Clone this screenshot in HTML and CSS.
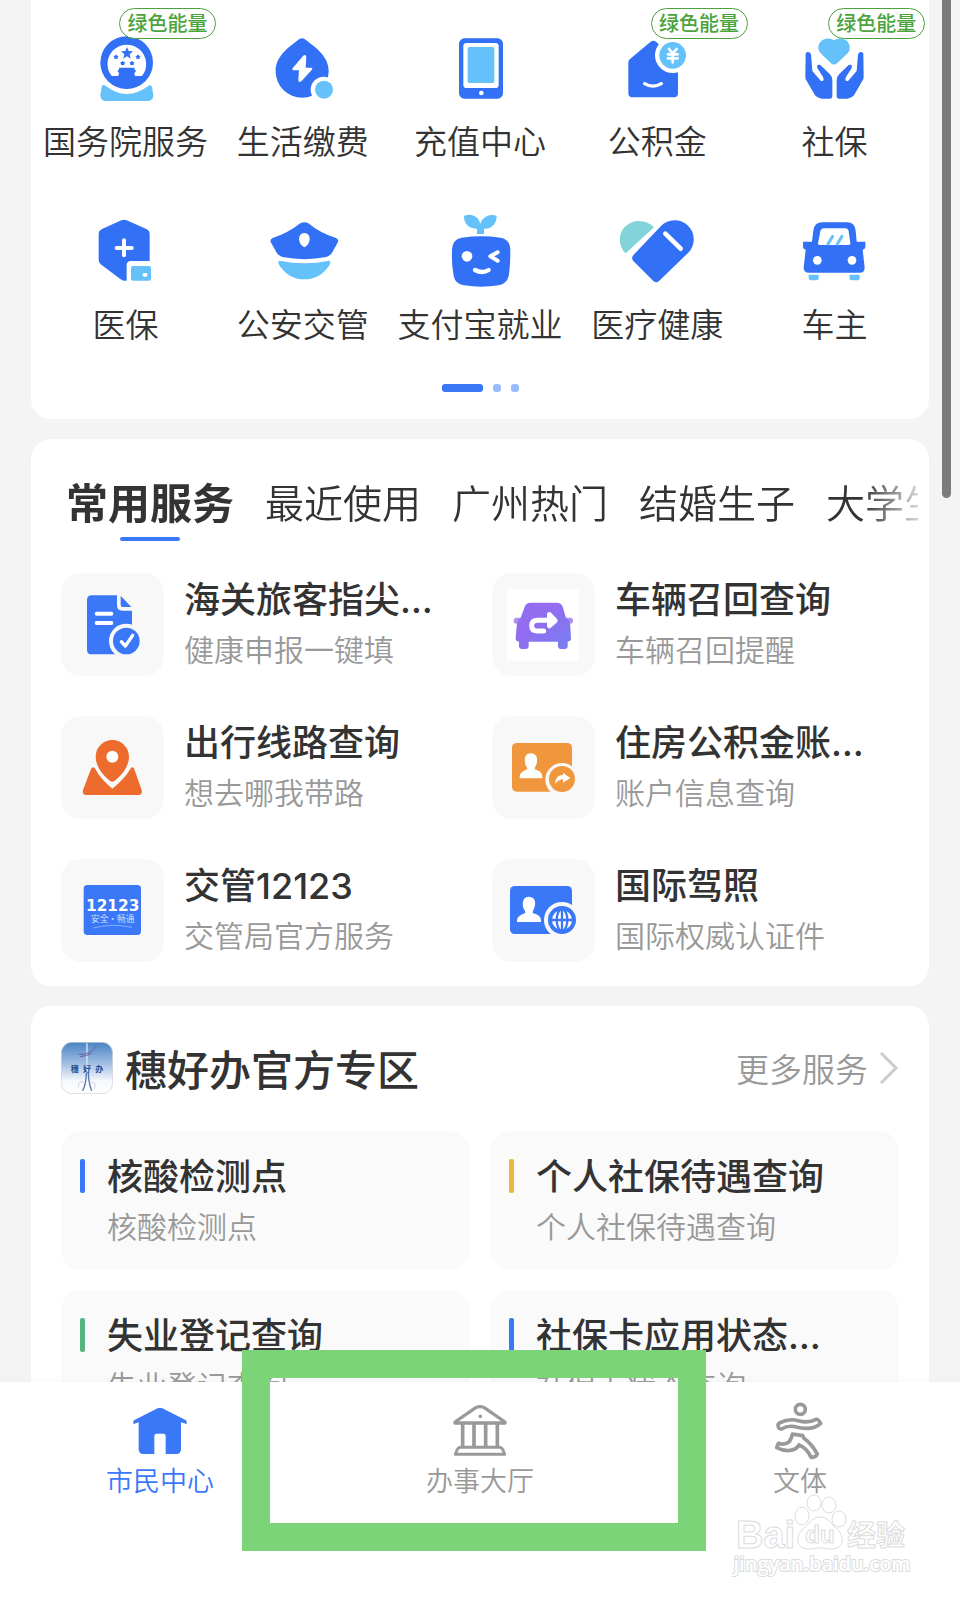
FILE: index.html
```html
<!DOCTYPE html>
<html lang="zh-CN">
<head>
<meta charset="utf-8">
<meta name="viewport" content="width=device-width, initial-scale=1">
<title>市民中心</title>
<link rel="stylesheet" href="styles.css">
</head>
<body>
<main class="content">
  <section class="card card-top">
    <div class="apps">
      <a class="app" href="#">
        <svg class="app-icon" viewBox="257 84 240 240" aria-hidden="true">
          <circle class="blue" cx="379" cy="188" r="79"/>
          <path class="white" d="M334 228A58 58 0 1 1 425 228H404L402 219L408 212L403 209V203H356V209L351 212L356 219L354 228Z"/>
          <path class="blue" d="M380 141L385 153L398 154L388 163L391 176L380 169L369 176L372 163L362 154L375 153Z"/>
          <path class="blue" d="M347 163l3 4 5 1-3 4 0 5-5-1-5 1 0-5-3-4 5-1zM413 163l3 4 5 1-3 4 0 5-5-1-5 1 0-5-3-4 5-1zM367 182l3 4 5 1-3 4 0 5-5-1-5 1 0-5-3-4 5-1zM395 182l3 4 5 1-3 4 0 5-5-1-5 1 0-5-3-4 5-1z"/>
          <path class="sky" d="M313 256Q379 308 447 256Q453 254 455 261L459 285Q459 303 440 303H319Q300 303 300 285L304 261Q306 253 313 256Z"/>
        </svg>
        <span class="app-name">国务院服务</span>
        <span class="badge">绿色能量</span>
      </a>
      <a class="app" href="#">
        <svg class="app-icon" viewBox="788 84 240 240" aria-hidden="true">
          <path class="blue" d="M896 118Q905 111 914 118C950 146 985 170 985 214A79.500 79.500 0 0 1 826 214C826 170 860 146 896 118Z"/>
          <path class="white" d="M908 168Q916 161 918 171L916 203H932Q939 204 934 210L903 244Q894 249 894 239L896 211H880Q873 209 878 203Z"/>
          <circle class="white" cx="970" cy="269" r="39"/>
          <circle class="sky" cx="971" cy="269" r="27"/>
        </svg>
        <span class="app-name">生活缴费</span>
      </a>
      <a class="app" href="#">
        <svg class="app-icon" viewBox="1320 84 240 240" aria-hidden="true">
          <rect class="blue" x="1377" y="115" width="132" height="181" rx="16"/>
          <rect class="white" x="1390" y="129" width="106" height="135" rx="10"/>
          <rect class="sky" x="1403" y="141" width="80" height="108" rx="6"/>
          <circle class="white" cx="1444" cy="279" r="7"/>
        </svg>
        <span class="app-name">充值中心</span>
      </a>
      <a class="app" href="#">
        <svg class="app-icon" viewBox="411 84 240 240" aria-hidden="true">
          <path class="blue" d="M450 177L511 126Q520 118 529 126L594 186V280Q594 292 582 292H457Q445 292 445 280V187Q445 181 450 177Z"/>
          <circle class="white" cx="578" cy="166" r="53"/>
          <circle class="sky" cx="578" cy="166" r="40"/>
          <path class="line-white" stroke-width="8" d="M567 147L578 160L590 147M564 163H593M564 175H593M578 160V187"/>
          <path class="line-white" stroke-width="10" d="M494 251Q519 266 544 251"/>
        </svg>
        <span class="app-name">公积金</span>
        <span class="badge">绿色能量</span>
      </a>
      <a class="app" href="#">
        <svg class="app-icon" viewBox="943 84 240 240" aria-hidden="true">
          <path class="blue" d="M978 160Q987 151 994 163L998 213L1023 242Q1036 246 1030 231L1013 204Q1010 191 1022 195L1050 222Q1058 230 1058 240V288Q1058 296 1050 296H1025Q1012 294 1006 286L980 241Q977 237 977 230Z"/>
          <path class="blue" d="M1151 160Q1142 151 1135 163L1131 213L1106 242Q1093 246 1099 231L1116 204Q1119 191 1107 195L1079 222Q1071 230 1071 240V288Q1071 296 1079 296H1104Q1117 294 1123 286L1149 241Q1152 237 1152 230Z"/>
          <path class="sky" d="M1063 121Q1075 113 1088 116C1108 120 1118 144 1104 160L1073 189Q1063 198 1053 189L1023 160C1008 144 1018 120 1039 116Q1052 113 1063 121Z"/>
        </svg>
        <span class="app-name">社保</span>
        <span class="badge">绿色能量</span>
      </a>
      <a class="app" href="#">
        <svg class="app-icon" viewBox="257 33 240 240" aria-hidden="true">
          <path class="blue" d="M363 61Q371 57 379 61L438 87Q448 92 448 102V183H392Q379 183 379 196V242H372Q366 242 360 237L301 193Q295 188 295 180V102Q295 92 305 87Z"/>
          <path class="line-white" stroke-width="12" d="M371 121V166M349 144H394"/>
          <rect class="sky" x="392" y="198" width="60" height="44" rx="6"/>
          <rect class="white" x="427" y="219" width="14" height="11" rx="4"/>
        </svg>
        <span class="app-name">医保</span>
      </a>
      <a class="app" href="#">
        <svg class="app-icon" viewBox="788 33 240 240" aria-hidden="true">
          <path class="blue" d="M900 70Q912 64 924 70Q960 100 1007 114Q1016 118 1013 126L995 158Q988 168 978 171Q912 184 846 171Q836 168 829 158L811 126Q808 118 817 114Q862 100 900 70Z"/>
          <path class="white" d="M912 99Q928 100 928 118Q926 136 912 142Q898 136 896 118Q896 100 912 99Z"/>
          <path class="sky" d="M838 182Q912 197 986 182Q993 183 988 194Q960 238 912 238Q864 238 836 194Q831 183 838 182Z"/>
        </svg>
        <span class="app-name">公安交管</span>
      </a>
      <a class="app" href="#">
        <svg class="app-icon" viewBox="1320 33 240 240" aria-hidden="true">
          <path class="sky" d="M1392 48C1415 38 1436 50 1441 72C1445 56 1465 38 1490 48C1490 75 1470 88 1452 86V102H1431V86C1410 86 1392 75 1392 48Z"/>
          <path class="blue" d="M1385 113Q1443 105 1502 113Q1530 118 1531 148Q1531 200 1526 228Q1520 252 1496 256Q1443 264 1392 256Q1366 252 1361 228Q1354 190 1356 148Q1358 118 1385 113Z"/>
          <circle class="white" cx="1401" cy="169" r="16"/>
          <path class="line-white" stroke-width="12" d="M1493 157L1471 169L1493 182"/>
          <path class="line-white" stroke-width="13" d="M1425 210Q1447 222 1466 210"/>
        </svg>
        <span class="app-name">支付宝就业</span>
      </a>
      <a class="app" href="#">
        <svg class="app-icon" viewBox="411 33 240 240" aria-hidden="true">
          <path class="teal" d="M437 160C412 135 415 95 440 76C465 56 500 60 522 82Z"/>
          <path class="blue" d="M461 164L543 78A57 57 0 0 1 625 158L537 243Q529 251 520 243L460 183Q452 174 461 164Z"/>
          <path class="line-white" stroke-width="14" d="M556 101L602 146"/>
        </svg>
        <span class="app-name">医疗健康</span>
      </a>
      <a class="app" href="#">
        <svg class="app-icon" viewBox="943 33 240 240" aria-hidden="true">
          <path class="blue" d="M1001 92Q1004 67 1028 67H1102Q1125 67 1128 92L1131 125H1157V141Q1157 148 1149 149L1155 203Q1155 218 1140 218H988Q972 218 972 203L978 149Q970 148 970 141V125H997Z"/>
          <path class="white" d="M1022 94Q1024 85 1033 85H1096Q1105 85 1107 94L1112 130Q1112 135 1107 135H1020Q1015 135 1015 130Z"/>
          <path class="line-sky" stroke-width="9" d="M1045 132L1059 109M1073 132L1087 109"/>
          <circle class="white" cx="1013" cy="181" r="13"/>
          <circle class="white" cx="1117" cy="181" r="13"/>
          <path class="sky" d="M987 224H1017V235Q1017 241 1011 241H993Q987 241 987 235ZM1110 224H1140V235Q1140 241 1134 241H1116Q1110 241 1110 235Z"/>
        </svg>
        <span class="app-name">车主</span>
      </a>
    </div>
    <div class="pager"><span class="page page-on"></span><span class="page"></span><span class="page"></span></div>
  </section>

  <section class="card card-services">
    <div class="tabs" role="tablist">
      <button class="tab tab-on" role="tab" aria-selected="true">常用服务</button>
      <button class="tab" role="tab">最近使用</button>
      <button class="tab" role="tab">广州热门</button>
      <button class="tab" role="tab">结婚生子</button>
      <button class="tab" role="tab">大学生</button>
    </div>
    <div class="services">
      <a class="service" href="#">
        <svg class="tile" viewBox="183 426 309 309" aria-hidden="true">
          <path class="azure" d="M275 493H351V523Q351 539 367 539H396V670H275Q261 670 261 656V507Q261 493 275 493ZM362 494L394 528H368Q362 528 362 522Z"/>
          <path class="line-white" stroke-width="12" d="M290 548H334M290 576H334"/>
          <circle class="tile-bg" cx="379" cy="630" r="52"/>
          <circle class="azure" cx="379" cy="630" r="40"/>
          <path class="line-white" stroke-width="10" d="M364 632L376 645L398 613"/>
        </svg>
        <span class="service-text"><strong class="title">海关旅客指尖…</strong><span class="sub">健康申报一键填</span></span>
      </a>
      <a class="service" href="#">
        <svg class="tile" viewBox="36 426 309 309" aria-hidden="true">
          <defs><linearGradient id="violet" x1="0" y1="0" x2="1" y2="1"><stop offset="0.400" stop-color="#926df0"/><stop offset="1" stop-color="#757ff0"/></linearGradient></defs>
          <rect class="white" x="81" y="474" width="216" height="216"/>
          <rect fill="#b48ff0" x="101" y="560" width="30" height="18" rx="8"/>
          <rect fill="#b48ff0" x="249" y="560" width="30" height="18" rx="8"/>
          <path fill="url(#violet)" d="M133 530Q137 515 152 515H230Q245 515 249 530L258 561Q270 565 271 585L273 622Q273 632 263 632V645Q263 654 254 654H243Q234 654 234 645V632H146V645Q146 654 137 654H126Q117 654 117 645V632Q107 632 107 622L110 585Q112 567 122 560Z"/>
          <path class="line-white" stroke-width="15" d="M191 600H173Q155 600 155 584Q155 568 173 568H206"/>
          <path class="arrow-head" stroke-width="14" d="M208 550L226 569L208 585Z"/>
        </svg>
        <span class="service-text"><strong class="title">车辆召回查询</strong><span class="sub">车辆召回提醒</span></span>
      </a>
      <a class="service" href="#">
        <svg class="tile" viewBox="183 48 309 309" aria-hidden="true">
          <path fill="#ec6b2d" d="M337 120A50 50 0 0 1 387 170C387 205 356 234 343 243Q337 247 331 243C318 234 287 205 287 170A50 50 0 0 1 337 120ZM276 203Q282 199 286 207Q300 235 337 266Q375 235 391 207Q396 198 402 205L425 270Q428 285 415 285H259Q246 285 249 270L273 207Z"/>
          <circle class="white" cx="337" cy="170" r="18"/>
        </svg>
        <span class="service-text"><strong class="title">出行线路查询</strong><span class="sub">想去哪我带路</span></span>
      </a>
      <a class="service" href="#">
        <svg class="tile" viewBox="36 48 309 309" aria-hidden="true">
          <rect class="orange" x="96" y="129" width="180" height="146" rx="14"/>
          <path class="white" d="M152 160C168 160 173 172 171 186C170 196 164 200 164 208Q187 214 187 230V235H119V230Q119 216 142 208Q142 202 138 198C133 188 130 160 152 160Z"/>
          <circle class="tile-bg" cx="246" cy="239" r="50"/>
          <circle class="orange" cx="246" cy="237" r="39"/>
          <path class="white" d="M225 252Q226 225 249 225V218L271 234L249 248V238Q236 238 225 252Z"/>
        </svg>
        <span class="service-text"><strong class="title">住房公积金账…</strong><span class="sub">账户信息查询</span></span>
      </a>
      <a class="service" href="#">
        <svg class="tile" viewBox="183 480 309 309" aria-hidden="true">
          <rect class="azure" x="251" y="558" width="172" height="150" rx="11"/>
          <text class="plate-num" x="338" y="637" text-anchor="middle">12123</text>
          <text class="plate-text" x="338" y="670" text-anchor="middle">安全·畅通</text>
          <path fill="none" stroke="#a9c8ff" stroke-width="2" d="M280 687Q335 672 396 685"/>
        </svg>
        <span class="service-text"><strong class="title">交管12123</strong><span class="sub">交管局官方服务</span></span>
      </a>
      <a class="service" href="#">
        <svg class="tile" viewBox="36 480 309 309" aria-hidden="true">
          <rect class="azure" x="90" y="561" width="186" height="144" rx="14"/>
          <path class="white" d="M146 593C162 593 167 605 165 619C164 629 158 634 158 642Q183 648 183 664V669H111V664Q111 650 136 642Q136 636 132 631C127 621 124 593 146 593Z"/>
          <circle class="tile-bg" cx="246" cy="663" r="54"/>
          <circle class="azure" cx="246" cy="663" r="42"/>
          <circle class="white" cx="246" cy="663" r="30"/>
          <path class="line-azure" stroke-width="7" d="M246 631V695M214 663H278"/>
          <ellipse class="line-azure" stroke-width="7" cx="246" cy="663" rx="16" ry="33"/>
        </svg>
        <span class="service-text"><strong class="title">国际驾照</strong><span class="sub">国际权威认证件</span></span>
      </a>
    </div>
  </section>

  <section class="card card-zone">
    <header class="zone-head">
      <svg class="zone-logo" viewBox="183 126 156 156" aria-hidden="true">
        <defs><linearGradient id="sky-fade" x1="0" y1="0" x2="0" y2="1"><stop offset="0" stop-color="#4885c4"/><stop offset="0.400" stop-color="#9fbbe2"/><stop offset="0.750" stop-color="#f5f8fd"/><stop offset="1" stop-color="#fff"/></linearGradient></defs>
        <rect x="184" y="127" width="154" height="154" rx="32" fill="url(#sky-fade)" stroke="#c9ced8" stroke-width="2"/>
        <path fill="none" stroke="#d8e6f6" stroke-width="4" d="M261 130V215"/>
        <path fill="none" stroke="#6c5f9e" stroke-width="3" d="M236 163Q270 166 290 138M240 170Q262 168 274 160"/>
        <path fill="none" stroke="#5577ae" stroke-width="4" d="M259 218Q259 250 248 272M265 218Q266 250 275 272"/>
        <path fill="none" stroke="#d5cfe0" stroke-width="3" d="M256 248Q232 238 236 262M268 248Q290 240 284 266"/>
        <text class="logo-text" x="224 261 298" y="217" text-anchor="middle">穗好办</text>
      </svg>
      <h2 class="zone-title">穗好办官方专区</h2>
      <a class="more" href="#">更多服务
        <svg class="chevron" viewBox="0 0 20 32" aria-hidden="true"><path d="M2 1L17 16L2 31"/></svg>
      </a>
    </header>
    <div class="zone-grid">
      <a class="entry" href="#"><span class="mark mark-blue"></span><strong class="title">核酸检测点</strong><span class="sub">核酸检测点</span></a>
      <a class="entry" href="#"><span class="mark mark-gold"></span><strong class="title">个人社保待遇查询</strong><span class="sub">个人社保待遇查询</span></a>
      <a class="entry" href="#"><span class="mark mark-green"></span><strong class="title">失业登记查询</strong><span class="sub">失业登记查询</span></a>
      <a class="entry" href="#"><span class="mark mark-blue"></span><strong class="title">社保卡应用状态…</strong><span class="sub">社保卡状态查询</span></a>
    </div>
  </section>
</main>

<nav class="tabbar">
  <a class="nav-item nav-on" href="#">
    <svg class="nav-icon" viewBox="384 300 192 192" aria-hidden="true"><path class="azure" d="M473 325Q480 321 487 325L558 361Q562 366 560 372L543 367V448Q543 462 529 462H497V408Q497 401 490 401H470Q463 401 463 408V462H430Q416 462 416 448V367L401 372Q397 366 402 361Z"/></svg>
    市民中心
  </a>
  <a class="nav-item" href="#">
    <svg class="nav-icon line-gray" viewBox="1344 300 192 192" aria-hidden="true">
      <path stroke-width="10" d="M1365 366L1424 325Q1440 315 1456 325L1515 366V369H1365Z"/>
      <circle cx="1441" cy="349" r="3" stroke-width="5"/>
      <path stroke-width="11" d="M1388 372V438M1422 372V438M1457 372V438M1492 372V438"/>
      <path stroke-width="9" d="M1382 442H1498Q1508 442 1514 463H1366Q1372 442 1382 442Z"/>
    </svg>
    办事大厅
  </a>
  <a class="nav-item" href="#">
    <svg class="nav-icon line-gray" viewBox="864 300 192 192" aria-hidden="true">
      <circle cx="961" cy="328" r="15" stroke-width="11"/>
      <path stroke-width="11" d="M898 369C920 358 935 356 955 362C975 368 990 368 1008 358Q1014 356 1022 370C1005 386 975 388 945 380C930 377 915 380 905 387Q894 388 894 374Z"/>
      <path stroke-width="11" d="M937 402L968 407L972 415Q995 432 1012 462Q1008 472 993 472Q982 445 957 435C945 455 915 456 890 443L895 430Q915 437 928 425Q935 415 937 402Z"/>
    </svg>
    文体
  </a>
</nav>

<div class="highlight"></div>
<div class="scroll-thumb"></div>
<svg class="watermark" viewBox="0 0 180 90" aria-hidden="true">
  <text class="wm-bai" x="4" y="54">Bai</text>
  <ellipse cx="70" cy="22" rx="7" ry="9"/><ellipse cx="82" cy="9" rx="7" ry="8"/><ellipse cx="97" cy="11" rx="7" ry="8"/><ellipse cx="107" cy="25" rx="7" ry="8"/>
  <path d="M88 23C97 23 100 31 104 34C114 43 112 55 99 55C93 55 92 54 88 54C84 54 82 55 77 55C64 55 62 43 72 34C77 31 79 23 88 23Z"/>
  <text class="wm-du" x="88" y="49" text-anchor="middle">du</text>
  <text class="wm-jy" x="115" y="52">经验</text>
  <text class="wm-url" x="90" y="77" text-anchor="middle">jingyan.baidu.com</text>
</svg>
</body>
</html>
```

FILE: styles.css
```css
* { box-sizing: border-box; }

body {
  margin: 0;
  height: 100vh;
  display: flex;
  flex-direction: column;
  position: relative;
  overflow: hidden;
  background: #f4f4f4;
  color: #333;
  font-family: "Noto Sans CJK SC", sans-serif;
  font-weight: 350;
}

a { color: inherit; text-decoration: none; }

.content {
  flex: 1;
  min-height: 0;
  overflow: hidden;
  padding: 0 31px;
}

.card {
  background: #fff;
  border-radius: 20px;
  margin-bottom: 20px;
}

/* icon paints */
.blue { fill: #3270f6; }
.azure { fill: #3a78f8; }
.sky { fill: #65c1f9; }
.teal { fill: #83d3da; }
.orange { fill: #f0973e; }
.white { fill: #fff; }
.tile-bg { fill: #f8f8f8; }
.line-white, .line-sky, .line-azure, .line-gray {
  fill: none;
  stroke-linecap: round;
  stroke-linejoin: round;
}
.line-white { stroke: #fff; }
.line-sky { stroke: #65c1f9; }
.line-azure { stroke: #3a78f8; }
.line-gray { stroke: #999; }
.arrow-head { fill: #fff; stroke: #fff; stroke-linejoin: round; }

/* app grid */
.card-top {
  border-radius: 0 0 20px 20px;
  padding: 28px 6px 27px;
}
.apps {
  display: grid;
  grid-template-columns: repeat(5, 1fr);
  row-gap: 48px;
}
.app {
  position: relative;
  display: flex;
  flex-direction: column;
  align-items: center;
  gap: 9px;
}
.app-icon { width: 80px; height: 80px; }
.app-name {
  font-size: 33px;
  line-height: 46px;
  white-space: nowrap;
}
.badge {
  position: absolute;
  top: -20px;
  left: 82px;
  width: 97px;
  height: 31px;
  border: 1px solid #4ba33c;
  border-radius: 16px;
  background: #fff;
  color: #4ba33c;
  font-size: 20px;
  font-weight: 500;
  line-height: 28px;
  text-align: center;
}
.pager {
  display: flex;
  justify-content: center;
  gap: 10px;
  margin-top: 38px;
}
.page {
  width: 8px;
  height: 8px;
  border-radius: 3px;
  background: #98bbfb;
}
.page-on { width: 41px; background: #3a78f8; }

/* services */
.card-services { padding: 32px 30px 24px; }
.tabs {
  display: flex;
  gap: 31px;
  overflow: hidden;
  margin: 0 -19px 0 5px;
  -webkit-mask-image: linear-gradient(to left, rgba(0, 0, 0, 0.2), #000 56px);
  mask-image: linear-gradient(to left, rgba(0, 0, 0, 0.2), #000 56px);
}
.tab {
  flex: none;
  position: relative;
  height: 70px;
  padding: 0 0 10px;
  border: 0;
  background: none;
  color: #333;
  font-family: inherit;
  font-weight: inherit;
  font-size: 39px;
  line-height: 60px;
}
.tab-on { font-size: 42px; font-weight: 700; }
.tab-on::after {
  content: "";
  position: absolute;
  left: 50%;
  bottom: 0;
  width: 60px;
  height: 4px;
  margin-left: -30px;
  border-radius: 2px;
  background: #3a78f8;
}
.services {
  display: grid;
  grid-template-columns: 1fr 1fr;
  gap: 40px 24px;
  margin-top: 32px;
}
.service {
  display: flex;
  gap: 20px;
  min-width: 0;
}
.tile {
  flex: none;
  width: 103px;
  height: 103px;
  border-radius: 20px;
  background: #f8f8f8;
}
.service-text { min-width: 0; }
.title, .sub {
  display: block;
  white-space: nowrap;
}
.title {
  font-family: Inter, "Noto Sans CJK SC", sans-serif;
  font-size: 36px;
  font-weight: 500;
  line-height: 54px;
}
.sub { font-size: 30px; line-height: 42px; color: #999; }
.plate-num {
  fill: #fff;
  font-family: "DejaVu Sans", sans-serif;
  font-size: 46px;
  font-weight: 700;
}
.plate-text { fill: #d4e3ff; font-size: 26px; }

/* official zone */
.card-zone { padding: 32px 30px; }
.zone-head {
  display: flex;
  align-items: center;
  height: 60px;
  margin-bottom: 33px;
}
.zone-logo { width: 52px; height: 52px; }
.logo-text { fill: #24508f; font-size: 24px; font-weight: 700; }
.zone-title {
  flex: 1;
  margin: 0 0 0 12px;
  font-size: 42px;
  font-weight: 500;
  line-height: 58px;
}
.more {
  display: flex;
  align-items: center;
  gap: 11px;
  color: #999;
  font-size: 33px;
  line-height: 58px;
}
.chevron {
  width: 20px;
  height: 32px;
  fill: none;
  stroke: #ccc;
  stroke-width: 3;
}
.zone-grid {
  display: grid;
  grid-template-columns: 1fr 1fr;
  gap: 20px;
}
.entry {
  position: relative;
  padding: 19px 20px 24px 46px;
  border-radius: 20px;
  background: #fafafa;
}
.mark {
  position: absolute;
  top: 28px;
  left: 19px;
  width: 5px;
  height: 34px;
  border-radius: 2px;
}
.mark-blue { background: #3a78f8; }
.mark-gold { background: #f0b53c; }
.mark-green { background: #56b482; }

/* bottom bar */
.tabbar {
  display: grid;
  grid-template-columns: repeat(3, 1fr);
  padding: 18px 0 101px;
  background: #fff;
  box-shadow: 0 -1px 8px rgba(0, 0, 0, 0.03);
  position: relative;
}
.nav-item {
  display: flex;
  flex-direction: column;
  align-items: center;
  color: #999;
  font-size: 27px;
  line-height: 32px;
}
.nav-on { color: #3a78f8; }
.nav-icon { width: 64px; height: 64px; }

/* overlays */
.highlight {
  position: absolute;
  left: 242px;
  bottom: 46px;
  width: 464px;
  height: 201px;
  border: 28px solid #7bd578;
}
.scroll-thumb {
  position: absolute;
  top: 0;
  right: 9px;
  width: 9px;
  height: 498px;
  border-radius: 0 0 5px 5px;
  background: #7b7b7b;
}
.watermark {
  position: absolute;
  right: 48px;
  bottom: 13px;
  width: 180px;
  height: 90px;
  fill: #fff;
  stroke: #dcdcdc;
  stroke-width: 1;
}
.wm-bai { font-family: "Liberation Sans", sans-serif; font-size: 38px; font-weight: 700; }
.wm-du { font-family: "Liberation Sans", sans-serif; font-size: 24px; font-weight: 700; }
.wm-jy { font-size: 29px; font-weight: 700; }
.wm-url {
  font-family: "Open Sans", sans-serif;
  font-size: 20px;
  font-weight: 600;
  paint-order: stroke;
  stroke-width: 2;
}
```
